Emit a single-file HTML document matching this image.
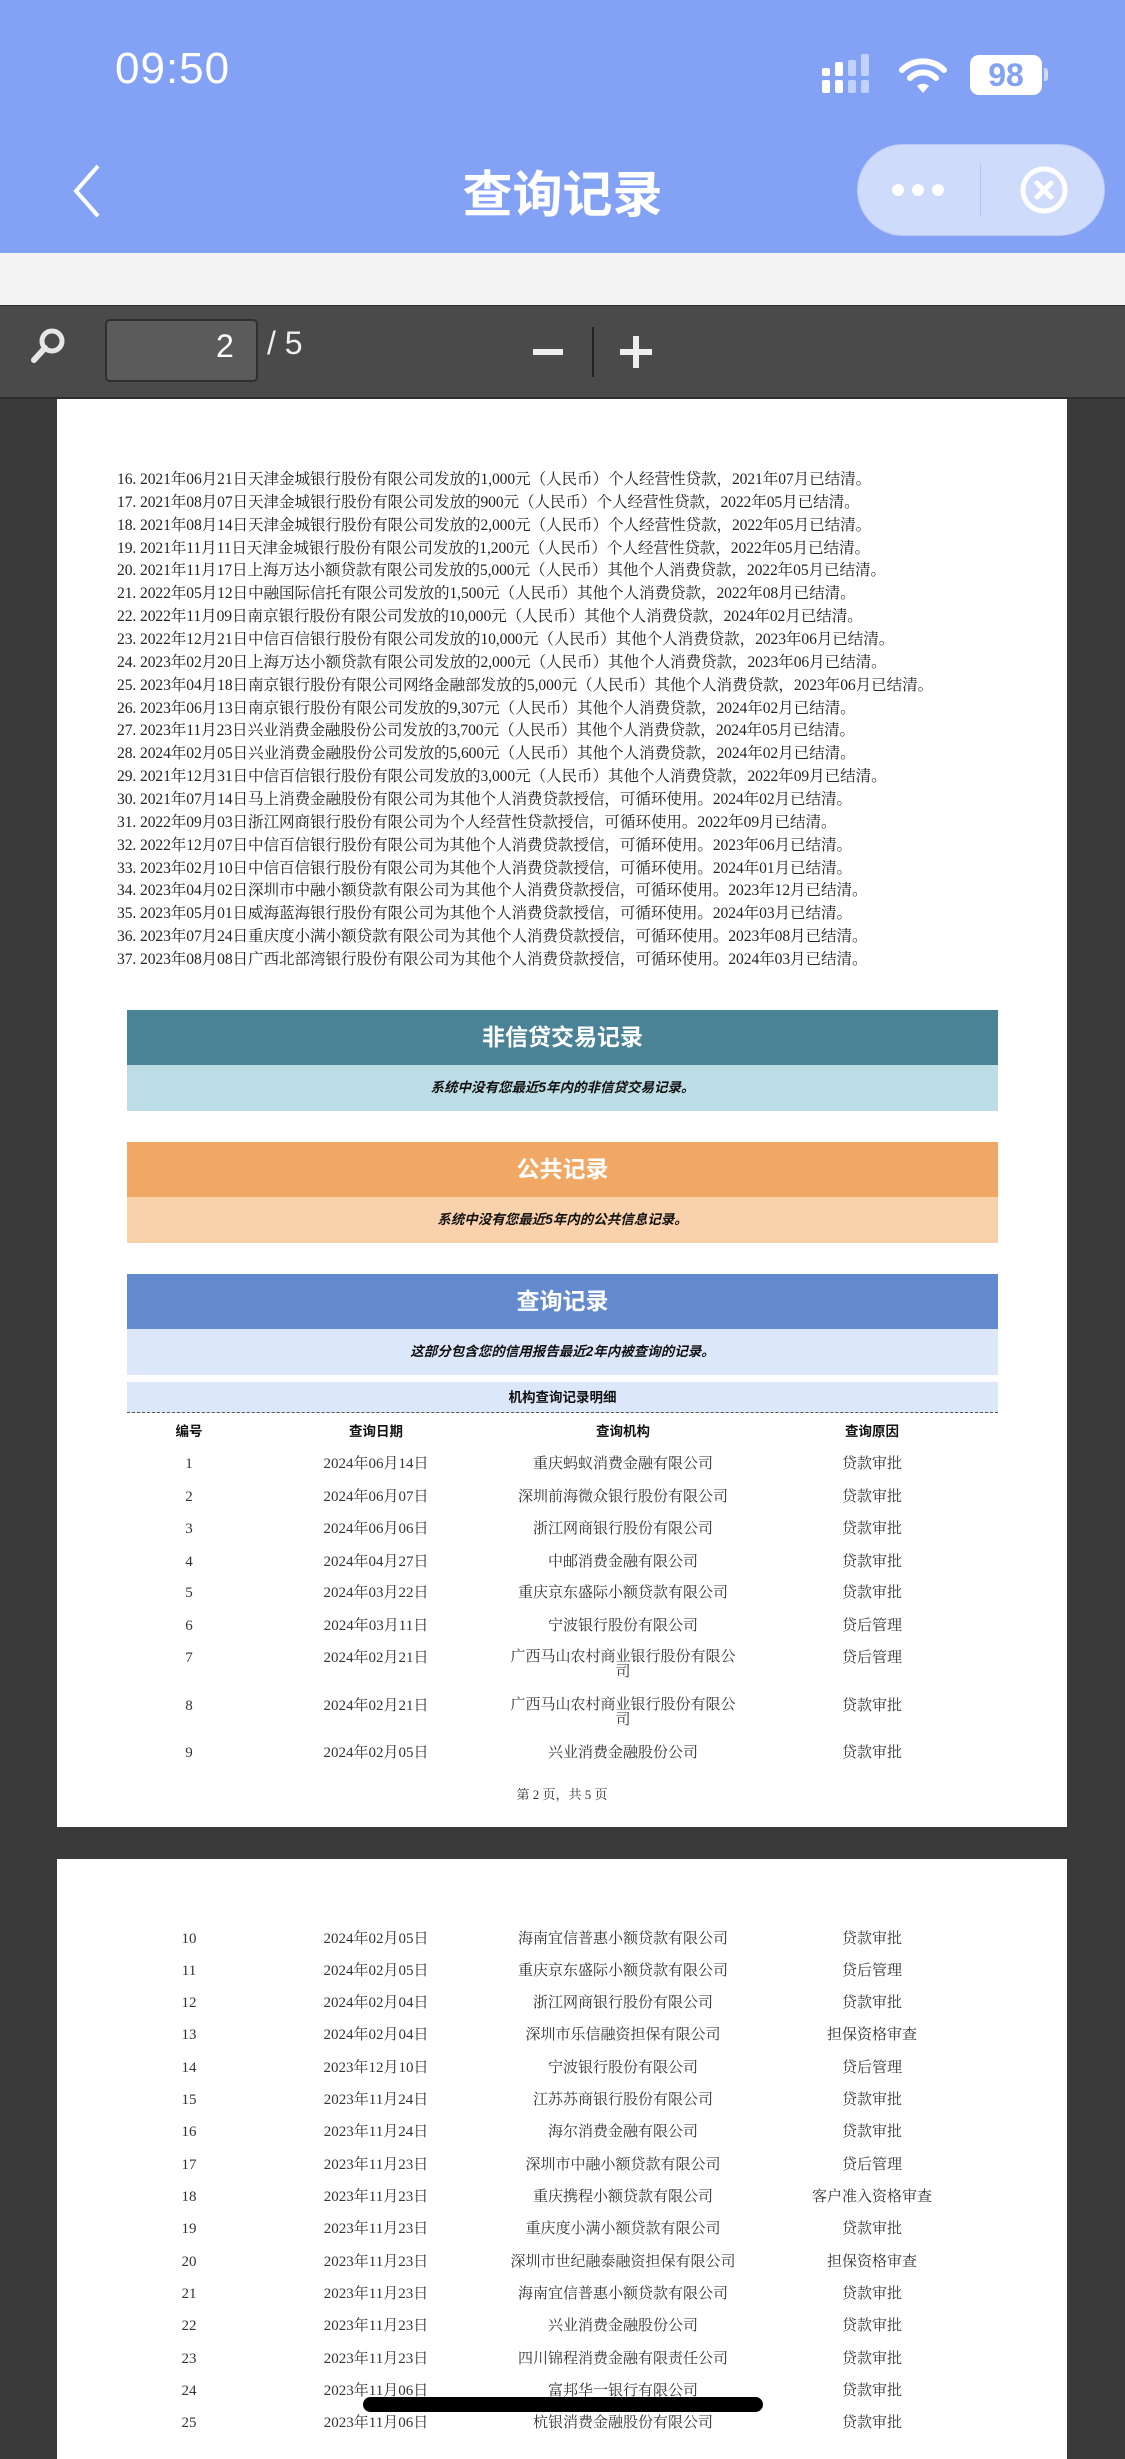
<!DOCTYPE html>
<html><head><meta charset="utf-8">
<style>
*{margin:0;padding:0;box-sizing:border-box}
body{width:1125px;height:2435px;overflow:hidden;background:#3a3a3a;position:relative;font-family:"Liberation Serif","Noto Serif CJK SC",serif;}
.abs{position:absolute}
#hdr{left:0;top:0;width:1125px;height:253px;background:#84a2f5}
#strip{left:0;top:253px;width:1125px;height:52px;background:#f4f4f4}
#tb{left:0;top:305px;width:1125px;height:94px;background:#4a4a4a;border-top:1px solid #2f2f2f;border-bottom:2px solid #2e2e2e}
.page{background:#fff;left:57px;width:1010px}
.ln{position:absolute;left:117px;font-size:15.6px;line-height:20px;color:#222;white-space:nowrap;letter-spacing:-0.1px}
.bar{position:absolute;left:127px;width:871px;text-align:center;font-family:"Liberation Sans","Noto Sans CJK SC",sans-serif}
.t{font-size:23px;color:#fff;font-weight:bold;line-height:55px;height:55px}
.s{font-size:13.5px;color:#111;font-weight:bold;font-style:italic;height:46px;line-height:46px}
.c{position:absolute;font-size:15px;color:#333;text-align:center;line-height:17px;transform:translateX(-50%);white-space:nowrap}
</style></head><body>
<div id="hdr" class="abs"></div>
<div class="abs" style="left:115px;top:44px;font-family:'Liberation Sans',sans-serif;font-size:44px;color:#fff;letter-spacing:1px">09:50</div>
<div class="abs" style="left:822px;top:68px;width:8px;height:8px;background:#fff;border-radius:2px"></div>
<div class="abs" style="left:822px;top:80px;width:8px;height:13px;background:#fff;border-radius:2px"></div>
<div class="abs" style="left:835px;top:62px;width:8px;height:14px;background:#fff;border-radius:2px"></div>
<div class="abs" style="left:835px;top:80px;width:8px;height:13px;background:#fff;border-radius:2px"></div>
<div class="abs" style="left:848px;top:60px;width:8px;height:16px;background:rgba(255,255,255,.5);border-radius:2px"></div>
<div class="abs" style="left:848px;top:80px;width:8px;height:13px;background:rgba(255,255,255,.5);border-radius:2px"></div>
<div class="abs" style="left:861px;top:54px;width:8px;height:22px;background:rgba(255,255,255,.5);border-radius:2px"></div>
<div class="abs" style="left:861px;top:80px;width:8px;height:13px;background:rgba(255,255,255,.5);border-radius:2px"></div>
<svg class="abs" style="left:898px;top:56px" width="50" height="40" viewBox="0 0 50 40"><path d="M4 14 A30 30 0 0 1 46 14" stroke="#fff" stroke-width="6" fill="none" stroke-linecap="round"/><path d="M12 22 A18 18 0 0 1 38 22" stroke="#fff" stroke-width="6" fill="none" stroke-linecap="round"/><path d="M19 30 L25 37 L31 30 A9 9 0 0 0 19 30Z" fill="#fff"/></svg>
<div class="abs" style="left:970px;top:55px;width:72px;height:40px;background:#fff;border-radius:9px;color:#84a2f5;font:bold 32px 'Liberation Sans',sans-serif;text-align:center;line-height:40px">98</div>
<div class="abs" style="left:1044px;top:68px;width:4px;height:13px;background:rgba(255,255,255,.6);border-radius:0 3px 3px 0"></div>
<svg class="abs" style="left:68px;top:162px" width="36" height="58"><path d="M30 4 L8 29 L30 54" stroke="#fff" stroke-width="4" fill="none"/></svg>
<div class="abs" style="left:0;width:1125px;top:155px;text-align:center;font:bold 50px 'Liberation Sans','Noto Sans CJK SC',sans-serif;color:#fff">查询记录</div>
<div class="abs" style="left:857px;top:144px;width:248px;height:92px;border-radius:46px;background:#cfdbfb;border:1px solid #b9c9f3"></div>
<div class="abs" style="left:980px;top:164px;width:1px;height:52px;background:#b3c3ee"></div>
<div class="abs" style="left:892px;top:184px;width:12px;height:12px;background:#fff;border-radius:50%"></div>
<div class="abs" style="left:912px;top:184px;width:12px;height:12px;background:#fff;border-radius:50%"></div>
<div class="abs" style="left:932px;top:184px;width:12px;height:12px;background:#fff;border-radius:50%"></div>
<svg class="abs" style="left:1018px;top:164px" width="52" height="52"><circle cx="26" cy="26" r="21" stroke="#fff" stroke-width="5" fill="none"/><path d="M19 19 L33 33 M33 19 L19 33" stroke="#fff" stroke-width="5" stroke-linecap="round"/></svg>
<div id="strip" class="abs"></div>
<div id="tb" class="abs"></div>
<svg class="abs" style="left:28px;top:326px" width="40" height="40"><circle cx="24" cy="15" r="10" stroke="#e6e6e6" stroke-width="5" fill="none"/><path d="M17 22 L6 34" stroke="#e6e6e6" stroke-width="6" stroke-linecap="round"/></svg>
<div class="abs" style="left:105px;top:319px;width:153px;height:63px;background:#5b5b5b;border:2px solid #2f2f2f;border-radius:5px"></div>
<div class="abs" style="left:216px;top:328px;font:32px 'Liberation Sans',sans-serif;color:#fff">2</div>
<div class="abs" style="left:267px;top:325px;font:32px 'Liberation Sans',sans-serif;color:#eee">/ 5</div>
<div class="abs" style="left:533px;top:349px;width:30px;height:6px;background:#eee"></div>
<div class="abs" style="left:592px;top:327px;width:2px;height:50px;background:#222"></div>
<div class="abs" style="left:620px;top:349px;width:32px;height:6px;background:#eee"></div>
<div class="abs" style="left:633px;top:336px;width:6px;height:32px;background:#eee"></div>
<div class="abs page" style="top:399px;height:1428px"></div>
<div class="ln" style="top:470px">16. 2021年06月21日天津金城银行股份有限公司发放的1,000元（人民币）个人经营性贷款，2021年07月已结清。</div>
<div class="ln" style="top:493px">17. 2021年08月07日天津金城银行股份有限公司发放的900元（人民币）个人经营性贷款，2022年05月已结清。</div>
<div class="ln" style="top:516px">18. 2021年08月14日天津金城银行股份有限公司发放的2,000元（人民币）个人经营性贷款，2022年05月已结清。</div>
<div class="ln" style="top:539px">19. 2021年11月11日天津金城银行股份有限公司发放的1,200元（人民币）个人经营性贷款，2022年05月已结清。</div>
<div class="ln" style="top:561px">20. 2021年11月17日上海万达小额贷款有限公司发放的5,000元（人民币）其他个人消费贷款，2022年05月已结清。</div>
<div class="ln" style="top:584px">21. 2022年05月12日中融国际信托有限公司发放的1,500元（人民币）其他个人消费贷款，2022年08月已结清。</div>
<div class="ln" style="top:607px">22. 2022年11月09日南京银行股份有限公司发放的10,000元（人民币）其他个人消费贷款，2024年02月已结清。</div>
<div class="ln" style="top:630px">23. 2022年12月21日中信百信银行股份有限公司发放的10,000元（人民币）其他个人消费贷款，2023年06月已结清。</div>
<div class="ln" style="top:653px">24. 2023年02月20日上海万达小额贷款有限公司发放的2,000元（人民币）其他个人消费贷款，2023年06月已结清。</div>
<div class="ln" style="top:676px">25. 2023年04月18日南京银行股份有限公司网络金融部发放的5,000元（人民币）其他个人消费贷款，2023年06月已结清。</div>
<div class="ln" style="top:699px">26. 2023年06月13日南京银行股份有限公司发放的9,307元（人民币）其他个人消费贷款，2024年02月已结清。</div>
<div class="ln" style="top:721px">27. 2023年11月23日兴业消费金融股份公司发放的3,700元（人民币）其他个人消费贷款，2024年05月已结清。</div>
<div class="ln" style="top:744px">28. 2024年02月05日兴业消费金融股份公司发放的5,600元（人民币）其他个人消费贷款，2024年02月已结清。</div>
<div class="ln" style="top:767px">29. 2021年12月31日中信百信银行股份有限公司发放的3,000元（人民币）其他个人消费贷款，2022年09月已结清。</div>
<div class="ln" style="top:790px">30. 2021年07月14日马上消费金融股份有限公司为其他个人消费贷款授信，可循环使用。2024年02月已结清。</div>
<div class="ln" style="top:813px">31. 2022年09月03日浙江网商银行股份有限公司为个人经营性贷款授信，可循环使用。2022年09月已结清。</div>
<div class="ln" style="top:836px">32. 2022年12月07日中信百信银行股份有限公司为其他个人消费贷款授信，可循环使用。2023年06月已结清。</div>
<div class="ln" style="top:859px">33. 2023年02月10日中信百信银行股份有限公司为其他个人消费贷款授信，可循环使用。2024年01月已结清。</div>
<div class="ln" style="top:881px">34. 2023年04月02日深圳市中融小额贷款有限公司为其他个人消费贷款授信，可循环使用。2023年12月已结清。</div>
<div class="ln" style="top:904px">35. 2023年05月01日威海蓝海银行股份有限公司为其他个人消费贷款授信，可循环使用。2024年03月已结清。</div>
<div class="ln" style="top:927px">36. 2023年07月24日重庆度小满小额贷款有限公司为其他个人消费贷款授信，可循环使用。2023年08月已结清。</div>
<div class="ln" style="top:950px">37. 2023年08月08日广西北部湾银行股份有限公司为其他个人消费贷款授信，可循环使用。2024年03月已结清。</div>

<div class="bar t" style="top:1010px;background:#4a8296">非信贷交易记录</div>
<div class="bar s" style="top:1065px;background:#bcdce6">系统中没有您最近5年内的非信贷交易记录。</div>
<div class="bar t" style="top:1142px;background:#f2a865">公共记录</div>
<div class="bar s" style="top:1197px;background:#f9d1ab">系统中没有您最近5年内的公共信息记录。</div>
<div class="bar t" style="top:1274px;background:#6389cf">查询记录</div>
<div class="bar s" style="top:1329px;background:#dde7fa">这部分包含您的信用报告最近2年内被查询的记录。</div>
<div class="bar" style="top:1382px;height:31px;line-height:31px;background:#dde7fa;font-size:13.5px;font-weight:bold;color:#111;border-bottom:1px dashed #555">机构查询记录明细</div>

<div class="c" style="left:189px;top:1423px;font-weight:bold;color:#111;font-family:'Liberation Sans','Noto Sans CJK SC',sans-serif;font-size:13.5px">编号</div>
<div class="c" style="left:376px;top:1423px;font-weight:bold;color:#111;font-family:'Liberation Sans','Noto Sans CJK SC',sans-serif;font-size:13.5px">查询日期</div>
<div class="c" style="left:623px;top:1423px;font-weight:bold;color:#111;font-family:'Liberation Sans','Noto Sans CJK SC',sans-serif;font-size:13.5px">查询机构</div>
<div class="c" style="left:872px;top:1423px;font-weight:bold;color:#111;font-family:'Liberation Sans','Noto Sans CJK SC',sans-serif;font-size:13.5px">查询原因</div>

<div class="c" style="left:189px;top:1456px">1</div><div class="c" style="left:376px;top:1456px">2024年06月14日</div><div class="c" style="left:623px;top:1456px">重庆蚂蚁消费金融有限公司</div><div class="c" style="left:872px;top:1456px">贷款审批</div>
<div class="c" style="left:189px;top:1489px">2</div><div class="c" style="left:376px;top:1489px">2024年06月07日</div><div class="c" style="left:623px;top:1489px">深圳前海微众银行股份有限公司</div><div class="c" style="left:872px;top:1489px">贷款审批</div>
<div class="c" style="left:189px;top:1521px">3</div><div class="c" style="left:376px;top:1521px">2024年06月06日</div><div class="c" style="left:623px;top:1521px">浙江网商银行股份有限公司</div><div class="c" style="left:872px;top:1521px">贷款审批</div>
<div class="c" style="left:189px;top:1554px">4</div><div class="c" style="left:376px;top:1554px">2024年04月27日</div><div class="c" style="left:623px;top:1554px">中邮消费金融有限公司</div><div class="c" style="left:872px;top:1554px">贷款审批</div>
<div class="c" style="left:189px;top:1585px">5</div><div class="c" style="left:376px;top:1585px">2024年03月22日</div><div class="c" style="left:623px;top:1585px">重庆京东盛际小额贷款有限公司</div><div class="c" style="left:872px;top:1585px">贷款审批</div>
<div class="c" style="left:189px;top:1618px">6</div><div class="c" style="left:376px;top:1618px">2024年03月11日</div><div class="c" style="left:623px;top:1618px">宁波银行股份有限公司</div><div class="c" style="left:872px;top:1618px">贷后管理</div>
<div class="c" style="left:189px;top:1650px">7</div><div class="c" style="left:376px;top:1650px">2024年02月21日</div><div class="c" style="left:623px;top:1650px;line-height:15px">广西马山农村商业银行股份有限公<br>司</div><div class="c" style="left:872px;top:1650px">贷后管理</div>
<div class="c" style="left:189px;top:1698px">8</div><div class="c" style="left:376px;top:1698px">2024年02月21日</div><div class="c" style="left:623px;top:1698px;line-height:15px">广西马山农村商业银行股份有限公<br>司</div><div class="c" style="left:872px;top:1698px">贷款审批</div>
<div class="c" style="left:189px;top:1745px">9</div><div class="c" style="left:376px;top:1745px">2024年02月05日</div><div class="c" style="left:623px;top:1745px">兴业消费金融股份公司</div><div class="c" style="left:872px;top:1745px">贷款审批</div>
<div class="c" style="left:562px;top:1786px;font-size:13px">第 2 页，共 5 页</div>

<div class="abs page" style="top:1859px;height:600px"></div>
<div class="c" style="left:189px;top:1931px">10</div><div class="c" style="left:376px;top:1931px">2024年02月05日</div><div class="c" style="left:623px;top:1931px">海南宜信普惠小额贷款有限公司</div><div class="c" style="left:872px;top:1931px">贷款审批</div>
<div class="c" style="left:189px;top:1963px">11</div><div class="c" style="left:376px;top:1963px">2024年02月05日</div><div class="c" style="left:623px;top:1963px">重庆京东盛际小额贷款有限公司</div><div class="c" style="left:872px;top:1963px">贷后管理</div>
<div class="c" style="left:189px;top:1995px">12</div><div class="c" style="left:376px;top:1995px">2024年02月04日</div><div class="c" style="left:623px;top:1995px">浙江网商银行股份有限公司</div><div class="c" style="left:872px;top:1995px">贷款审批</div>
<div class="c" style="left:189px;top:2027px">13</div><div class="c" style="left:376px;top:2027px">2024年02月04日</div><div class="c" style="left:623px;top:2027px">深圳市乐信融资担保有限公司</div><div class="c" style="left:872px;top:2027px">担保资格审查</div>
<div class="c" style="left:189px;top:2060px">14</div><div class="c" style="left:376px;top:2060px">2023年12月10日</div><div class="c" style="left:623px;top:2060px">宁波银行股份有限公司</div><div class="c" style="left:872px;top:2060px">贷后管理</div>
<div class="c" style="left:189px;top:2092px">15</div><div class="c" style="left:376px;top:2092px">2023年11月24日</div><div class="c" style="left:623px;top:2092px">江苏苏商银行股份有限公司</div><div class="c" style="left:872px;top:2092px">贷款审批</div>
<div class="c" style="left:189px;top:2124px">16</div><div class="c" style="left:376px;top:2124px">2023年11月24日</div><div class="c" style="left:623px;top:2124px">海尔消费金融有限公司</div><div class="c" style="left:872px;top:2124px">贷款审批</div>
<div class="c" style="left:189px;top:2157px">17</div><div class="c" style="left:376px;top:2157px">2023年11月23日</div><div class="c" style="left:623px;top:2157px">深圳市中融小额贷款有限公司</div><div class="c" style="left:872px;top:2157px">贷后管理</div>
<div class="c" style="left:189px;top:2189px">18</div><div class="c" style="left:376px;top:2189px">2023年11月23日</div><div class="c" style="left:623px;top:2189px">重庆携程小额贷款有限公司</div><div class="c" style="left:872px;top:2189px">客户准入资格审查</div>
<div class="c" style="left:189px;top:2221px">19</div><div class="c" style="left:376px;top:2221px">2023年11月23日</div><div class="c" style="left:623px;top:2221px">重庆度小满小额贷款有限公司</div><div class="c" style="left:872px;top:2221px">贷款审批</div>
<div class="c" style="left:189px;top:2254px">20</div><div class="c" style="left:376px;top:2254px">2023年11月23日</div><div class="c" style="left:623px;top:2254px">深圳市世纪融泰融资担保有限公司</div><div class="c" style="left:872px;top:2254px">担保资格审查</div>
<div class="c" style="left:189px;top:2286px">21</div><div class="c" style="left:376px;top:2286px">2023年11月23日</div><div class="c" style="left:623px;top:2286px">海南宜信普惠小额贷款有限公司</div><div class="c" style="left:872px;top:2286px">贷款审批</div>
<div class="c" style="left:189px;top:2318px">22</div><div class="c" style="left:376px;top:2318px">2023年11月23日</div><div class="c" style="left:623px;top:2318px">兴业消费金融股份公司</div><div class="c" style="left:872px;top:2318px">贷款审批</div>
<div class="c" style="left:189px;top:2351px">23</div><div class="c" style="left:376px;top:2351px">2023年11月23日</div><div class="c" style="left:623px;top:2351px">四川锦程消费金融有限责任公司</div><div class="c" style="left:872px;top:2351px">贷款审批</div>
<div class="c" style="left:189px;top:2383px">24</div><div class="c" style="left:376px;top:2383px">2023年11月06日</div><div class="c" style="left:623px;top:2383px">富邦华一银行有限公司</div><div class="c" style="left:872px;top:2383px">贷款审批</div>
<div class="c" style="left:189px;top:2415px">25</div><div class="c" style="left:376px;top:2415px">2023年11月06日</div><div class="c" style="left:623px;top:2415px">杭银消费金融股份有限公司</div><div class="c" style="left:872px;top:2415px">贷款审批</div>
<div class="abs" style="left:363px;top:2397px;width:400px;height:15px;background:#000;border-radius:8px"></div>
</body></html>
